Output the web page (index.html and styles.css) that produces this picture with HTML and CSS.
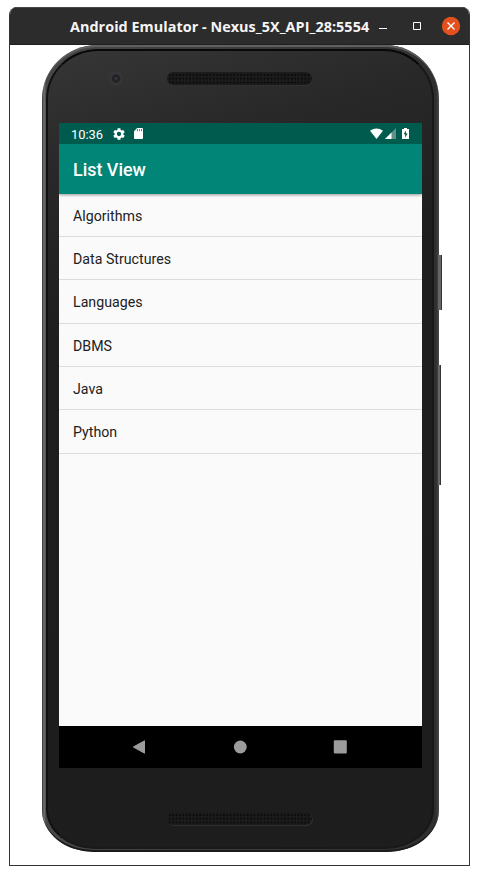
FILE: index.html
```html
<!DOCTYPE html>
<html lang="en">
<head>
<meta charset="utf-8">
<title>Android Emulator</title>
<link rel="stylesheet" href="styles.css">
</head>
<body>
<main class="window">
  <header class="titlebar">
    <h1 class="window-title">Android Emulator - Nexus_5X_API_28:5554</h1>
    <div class="window-controls">
      <svg width="83" height="19" viewBox="0 0 83 19" fill="none" stroke="#fff">
        <path d="M0 11.500h8M34.500 5.500h7v7h-7z"/>
        <circle cx="72" cy="9" r="9.200" fill="#e2501d" stroke="none"/>
        <path d="M68.500 5.500l7 7M75.500 5.500l-7 7" stroke-width="1.400"/>
      </svg>
    </div>
  </header>
  <section class="desktop">
    <div class="phone">
      <i class="side-key power"></i>
      <i class="side-key volume"></i>
      <div class="face">
        <div class="forehead">
          <div class="camera"></div>
          <div class="speaker"></div>
        </div>
        <div class="screen">
          <div class="status">
            <span class="clock">10:36</span>
            <svg class="gear" width="12" height="12" viewBox="2 2 20 20" fill="#fff"><path d="M19.140 12.940c.04-.3.06-.61.06-.94s-.02-.64-.07-.94l2.030-1.580a.49.49 0 0 0 .12-.61l-1.920-3.320a.488.488 0 0 0-.59-.22l-2.390.96a7 7 0 0 0-1.620-.94l-.36-2.540A.484.484 0 0 0 13.920 2.400h-3.840c-.24 0-.43.17-.47.41l-.36 2.540c-.59.24-1.130.57-1.620.94l-2.390-.96a.48.48 0 0 0-.59.22L2.740 8.870a.48.48 0 0 0 .12.61l2.030 1.580a7 7 0 0 0 0 1.880l-2.030 1.580a.49.49 0 0 0-.12.61l1.920 3.320c.12.22.37.29.59.22l2.390-.96c.5.38 1.030.7 1.620.94l.36 2.540c.05.24.24.41.48.41h3.840c.24 0 .44-.17.47-.41l.36-2.540a7 7 0 0 0 1.620-.94l2.390.96c.22.08.47 0 .59-.22l1.920-3.320a.47.47 0 0 0-.12-.61zM12 15.600A3.600 3.600 0 1 1 12 8.400a3.600 3.600 0 0 1 0 7.200z"/></svg>
            <svg class="card" width="9" height="11" viewBox="0 0 9 11"><path d="M3.200 0H8q1 0 1 1v9q0 1-1 1H1q-1 0-1-1V3.200z" fill="#fff"/><path d="M3.500 1v2.200M5.500 1v2.200M7.500 1v2.200" stroke="#4c8c84" stroke-width="1"/></svg>
            <svg class="signals" width="40" height="12" viewBox="0 0 40 12"><path d="M0 2.700Q6.500-1.700 13 2.700L6.500 11z" fill="#fff"/><path d="M26 0v11H15z" fill="#5b9389"/><path d="M21.500 4.500V11H15z" fill="#fff"/><path d="M34 0h3v1h2v10h-7V1h2z" fill="#fff"/><path d="M36 2.500L33.600 6.300h1.600v3.200l2.500-3.900H36z" fill="#005b4f"/></svg>
          </div>
          <div class="appbar">List View</div>
          <ul class="list">
            <li>Algorithms</li>
            <li>Data Structures</li>
            <li>Languages</li>
            <li>DBMS</li>
            <li>Java</li>
            <li>Python</li>
          </ul>
          <nav class="navbar">
            <svg width="14" height="14" viewBox="0 0 14 14"><path d="M1.300 7L12.500 .8v12.400z" fill="#9b9b9b" stroke="#9b9b9b" stroke-linejoin="round"/></svg>
            <svg width="14" height="14" viewBox="0 0 14 14"><circle cx="7.300" cy="7" r="6.400" fill="#9b9b9b"/></svg>
            <svg width="14" height="14" viewBox="0 0 14 14"><rect x=".8" y=".3" width="13" height="13.200" rx="1" fill="#9b9b9b"/></svg>
          </nav>
        </div>
        <div class="chin"><div class="speaker"></div></div>
      </div>
    </div>
  </section>
</main>
</body>
</html>
```
FILE: styles.css
```css
* { box-sizing: border-box; }

body {
  margin: 0;
  background: #fff;
  font-family: Roboto, sans-serif;
}

.window {
  width: 461px;
  height: 859px;
  margin: 7px 9px 0;
  display: flex;
  flex-direction: column;
  border: 1px solid #333;
  border-top: 0;
  border-radius: 8px 8px 0 0;
  overflow: hidden;
}

.titlebar {
  flex: none;
  height: 38px;
  display: flex;
  align-items: center;
  padding-left: 60px;
  background: #2c2c2c;
  border-top: 1px solid #474747;
  border-bottom: 1px solid #202020;
}

.window-title {
  width: 309px;
  margin: 0;
  padding-top: 1px;
  font: 700 14.4px/20px "Open Sans", sans-serif;
  letter-spacing: 0.04px;
  color: #f5f5f5;
  white-space: nowrap;
}

.window-controls { height: 19px; }
.window-controls svg { display: block; }

.desktop {
  flex: 1;
  padding-left: 32px;
}

.phone {
  position: relative;
  width: 397px;
  height: 807px;
  padding: 4px 4px 3px 4px;
  border-radius: 56px 54px 52px 52px / 54px 54px 42px 42px;
  background: linear-gradient(90deg, #333 0, #737373 2px, #484848 4px, #3c3a3b 50%, #302f30 calc(100% - 3px), #4b4a4b 100%);
}

.phone::before {
  content: "";
  position: absolute;
  inset: 0;
  border-radius: inherit;
  border-top: 2px solid #606060;
  border-bottom: 2px solid #1c1a1c;
}

.face {
  position: relative;
  width: 388px;
  height: 800px;
  padding: 0 12px 0 11px;
  border: 2px solid #111;
  border-top-color: #080808;
  border-right-color: #191819;
  border-bottom-color: #191919;
  border-radius: 52px 50px 49px 49px / 50px 50px 40px 40px;
  background: linear-gradient(165deg, #363637 0, #282828 14%, #1e1e1e 32%, #1d1d1d 100%);
}

.forehead {
  height: 72px;
  display: flex;
  align-items: flex-start;
  padding: 20px 0 0 49px;
}

.camera {
  width: 15px;
  height: 15px;
  border-radius: 50%;
  background: radial-gradient(circle at 54% 50%, #54434b 0, #211e24 2px, #26252a 4px, #373737 5px, #343434 7px);
}

.speaker {
  width: 145px;
  height: 13px;
  border-radius: 7px;
  background-color: #1b1b1b;
  background-image: radial-gradient(circle, #0b0b0b 0 .7px, transparent 1.2px);
  background-size: 3.4px 3.8px;
  background-position: 1px 1px;
  box-shadow: 1px 1px 0 #303030;
}

.forehead .speaker { margin: 1px 0 0 44px; }

.screen {
  width: 363px;
  height: 645px;
  display: flex;
  flex-direction: column;
  background: #fafafa;
}

.status {
  flex: none;
  height: 21px;
  display: flex;
  align-items: center;
  padding: 0 12px;
  background: #005b4f;
  color: #fff;
}

.clock { width: 42px; padding-top: 1px; font-size: 12.9px; }
.card { margin-left: 9px; }
.signals { margin-left: auto; }

.appbar {
  flex: none;
  height: 49.5px;
  padding-left: 14px;
  background: #008577;
  color: #fff;
  font-size: 17.9px;
  font-weight: 500;
  line-height: 51px;
  box-shadow: 0 1px 3px rgba(0, 0, 0, .4);
  clip-path: inset(0 0 -4px 0);
}

.list {
  flex: 1;
  margin: 0;
  padding: 0;
  list-style: none;
}

.list li {
  height: 43.35px;
  padding-left: 14px;
  border-bottom: 1px solid #dcdcdc;
  color: #212121;
  font-size: 14.2px;
  line-height: 44px;
}

.navbar {
  flex: none;
  height: 42px;
  display: flex;
  align-items: center;
  justify-content: space-between;
  padding: 0 75px 0 73px;
  background: #000;
}

.chin {
  display: flex;
  justify-content: center;
  padding: 44px 1px 0 0;
}

.side-key {
  position: absolute;
  left: 396px;
  background: #666;
  border-right: 1px solid #343434;
}

.power { top: 210px; width: 4px; height: 55px; }
.volume { top: 320px; width: 3px; height: 120px; }
```
